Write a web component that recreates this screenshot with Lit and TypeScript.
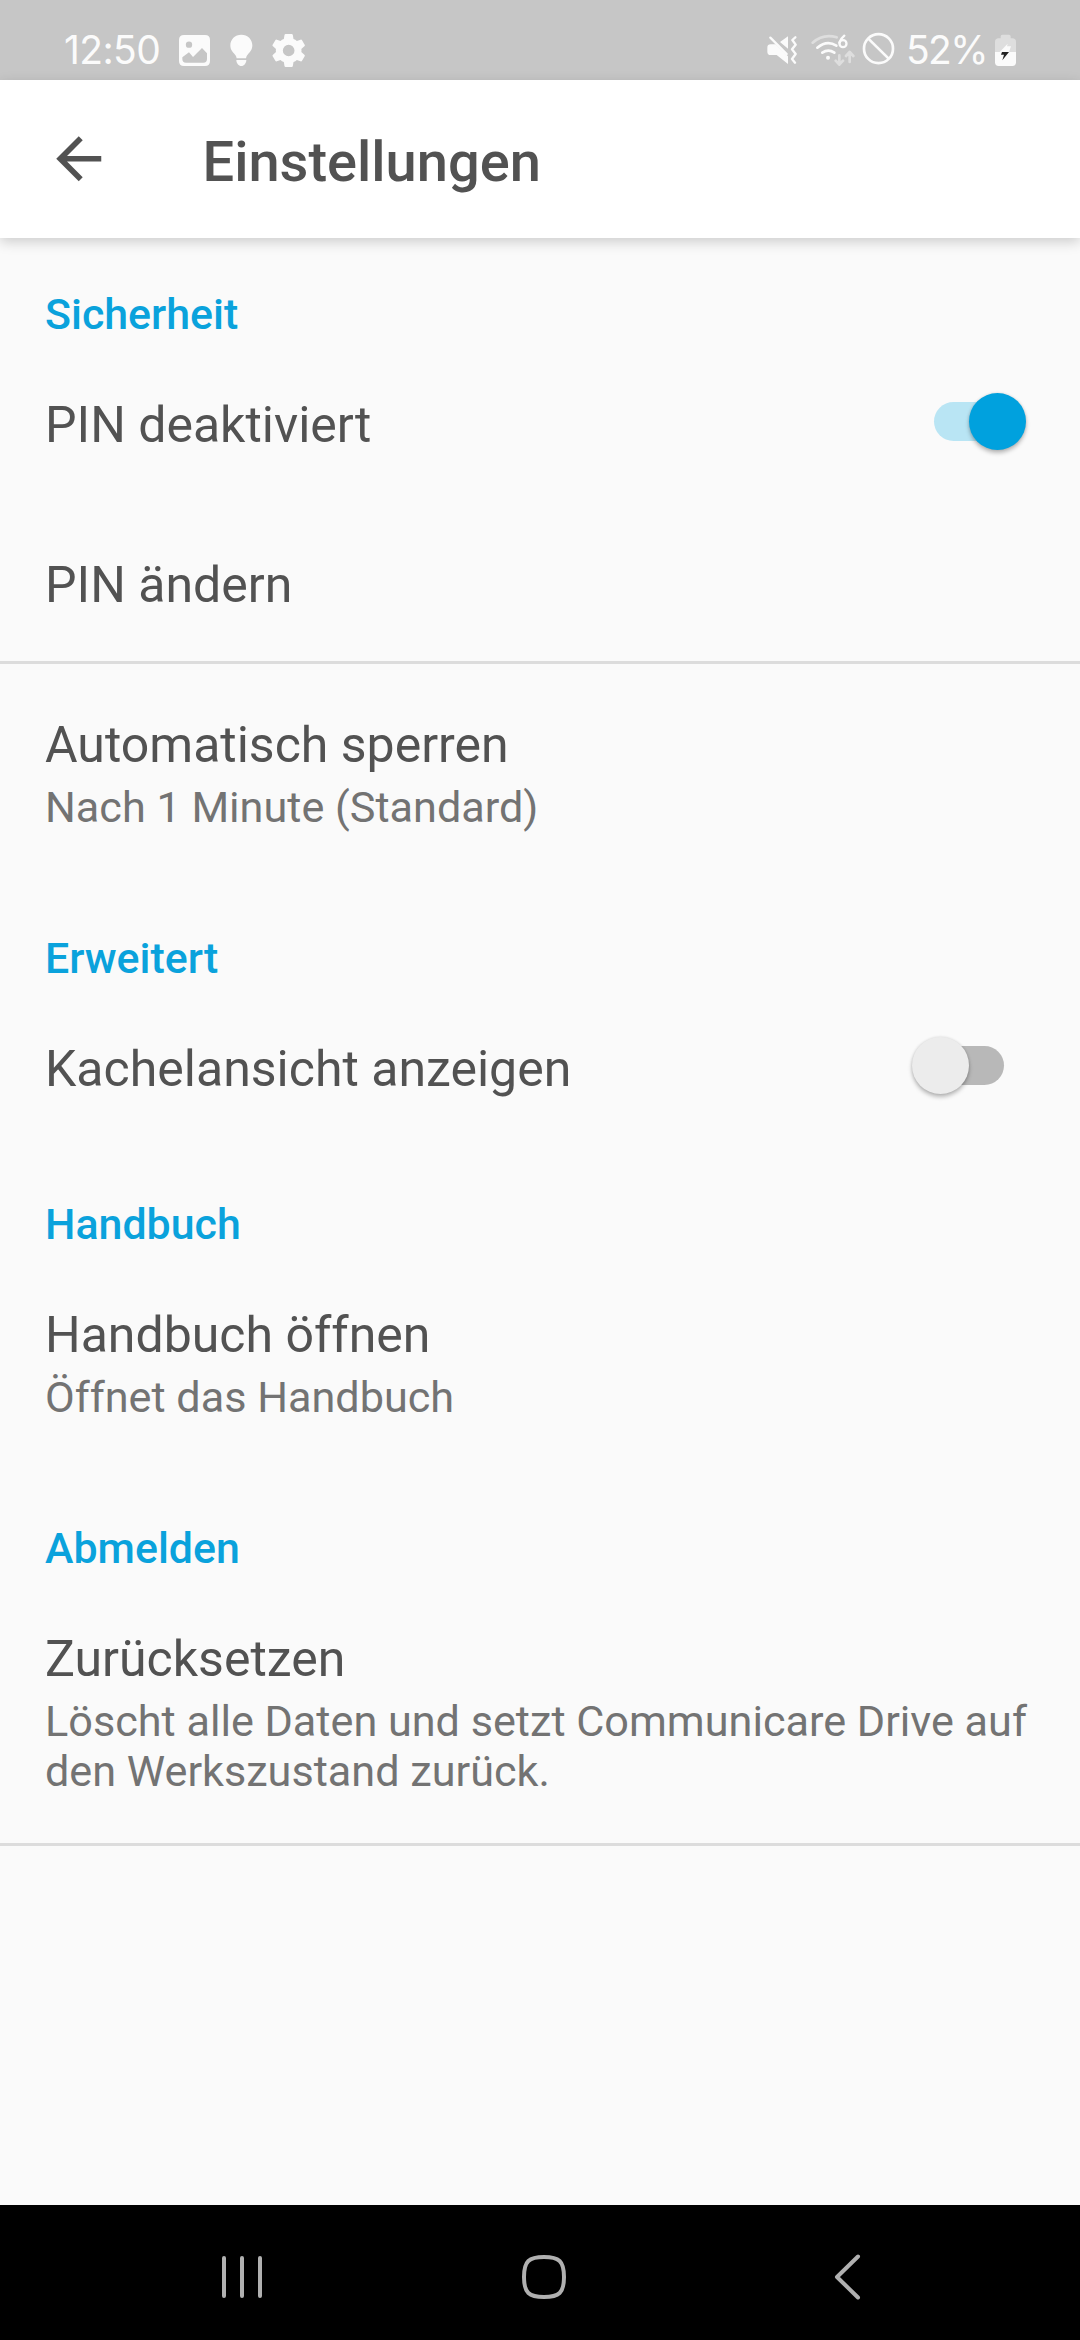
import { LitElement, html, css, nothing } from "lit";
import { customElement, property } from "lit/decorators.js";
import { classMap } from "lit/directives/class-map.js";

@customElement("status-bar")
class StatusBar extends LitElement {
  static styles = css`
    :host {
      display: flex;
      justify-content: space-between;
      box-sizing: border-box;
      height: 80px;
      padding: 30px 64px 0 64px;
      background: #c6c6c6;
      color: #fbfbfb;
      font-family: Inter, Roboto, sans-serif;
      font-weight: 400;
      font-size: 39px;
      line-height: 40px;
    }
    .side {
      display: flex;
      align-items: flex-start;
      height: 40px;
    }
    .time {
      width: 115px;
      letter-spacing: -0.6px;
      white-space: nowrap;
    }
    .percent {
      width: 89px;
      letter-spacing: -1.6px;
      white-space: nowrap;
    }
    svg {
      display: block;
      flex: none;
      height: 40px;
      fill: #fbfbfb;
    }
    .picture { width: 31px; margin-right: 20px; }
    .bulb { width: 23px; margin-right: 19px; }
    .gear { width: 33px; }
    .mute { width: 30px; margin-right: 14px; }
    .wifi { width: 44px; margin-right: 7px; }
    .block { width: 33px; margin-right: 11px; }
    .battery { width: 21px; }
    .line { fill: none; stroke: #fbfbfb; }
    .faint { fill: #dedede; }
    .faint-line { fill: none; stroke: #dedede; }
    .cut { fill: #c6c6c6; }
    .bolt { fill: #222; }
  `;
  render() {
    return html`
      <div class="side">
        <span class="time">12:50</span>
        <svg class="picture" viewBox="417 60 93 120">
          <path fill-rule="evenodd" d="M432 75h63q15 0 15 15v63q0 15-15 15h-63q-15 0-15-15V90q0-15 15-15ZM427 142v5q0 11 11 11h52q11 0 11-11v-17l-15-16-27 27-12-14Z"/>
          <circle class="cut" cx="447" cy="104" r="9.5"/>
        </svg>
        <svg class="bulb" viewBox="570 60 69 120">
          <path d="M604 74c-19 0-33 14-33 32 0 13 7 20 13 27 4 5 5 7 6 12h28c1-5 2-7 6-12 6-7 13-14 13-27 0-18-14-32-33-32ZM589 150h30c0 10-7 18-15 18s-15-8-15-18Z"/>
        </svg>
        <svg class="gear" viewBox="696 60 99 120">
          <path fill-rule="evenodd" d="M737 72h18q3 0 3.500 3l2 12q6 2 10 6l11-4q3-1 4.500 1.500l8 14q1.500 2.500-1 4.500l-9 8q1 4 0 9l9 8q2.500 2 1 4.500l-8 14q-1.500 2.500-4.500 1.500l-11-4q-4 4-10 6l-2 12q-.5 3-3.500 3h-18q-3 0-3.500-3l-2-12q-6-2-10-6l-11 4q-3 1-4.500-1.500l-8-14q-1.500-2.500 1-4.500l9-8q-1-5 0-9l-9-8q-2.500-2-1-4.500l8-14q1.500-2.500 4.500-1.500l11 4q4-4 10-6l2-12q.5-3 3.500-3ZM746 104a17.500 17.500 0 1 0 0 35 17.500 17.500 0 0 0 0-35Z"/>
        </svg>
      </div>
      <div class="side">
        <svg class="mute" viewBox="80 60 90 120">
          <path d="M143 79v37l-24-20ZM91 103h15l37 36v23l-34-27H91q-10 0-10-10v-12q0-10 10-10Z"/>
          <path class="line" stroke-width="7" stroke-linecap="round" d="M90 83l49 49"/>
          <path class="line" stroke-width="7" stroke-linecap="round" stroke-linejoin="round" d="M165 82l-9 8 10 14-11 14 11 14-11 15 9 11"/>
        </svg>
        <svg class="wifi" viewBox="214 60 132 120">
          <path class="faint-line" stroke-width="8" stroke-linecap="round" d="M219 98q32-28 72-16"/>
          <path class="line" stroke-width="8" stroke-linecap="round" d="M233 113q29-24 57-6M248 128q18-12 36 0"/>
          <circle cx="265" cy="143" r="6"/>
          <path class="line" stroke-width="7" stroke-linecap="round" d="M314 77q-12 10-15 21"/>
          <circle class="line" stroke-width="7" cx="310" cy="101" r="10.500"/>
          <path class="faint-line" stroke-width="8" stroke-linecap="round" stroke-linejoin="round" d="M299 136v27M288 152l11 12 11-12M330 156v-29M319 138l11-12 11 12"/>
        </svg>
        <svg class="block" viewBox="366 60 99 120">
          <circle class="line" stroke-width="8" cx="415.500" cy="116" r="43.500"/>
          <path class="line" stroke-width="8" d="M385 86l61 60"/>
        </svg>
        <span class="percent">52%</span>
        <svg class="battery" viewBox="765 60 63 120">
          <path class="faint" d="M787 74h20q5 0 5 5v6h5q11 0 11 11v30h-63V96q0-11 11-11h6v-6q0-5 5-5Z"/>
          <path d="M765 126h63v31q0 11-11 11h-41q-11 0-11-11Z"/>
          <path d="M803 101l-24 25h28l6-17h-12Z"/>
          <path class="bolt" d="M786 126h21l-20 25 5-17h-9Z"/>
        </svg>
      </div>
    `;
  }
}

@customElement("app-header")
class AppHeader extends LitElement {
  static styles = css`
    :host {
      display: flex;
      align-items: center;
      box-sizing: border-box;
      height: 158px;
      padding-left: 45px;
      background: #fff;
      color: #525252;
      box-shadow: 0 4px 12px rgba(0, 0, 0, 0.18);
      z-index: 1;
    }
    svg {
      width: 67.5px;
      height: 67.5px;
      fill: #525252;
    }
    h1 {
      margin: 6px 0 0 90px;
      font-size: 56px;
      font-weight: 500;
      line-height: 66px;
    }
  `;
  render() {
    return html`
      <svg viewBox="0 0 24 24"><path d="M20 11H7.830l5.590-5.590L12 4l-8 8 8 8 1.410-1.410L7.830 13H20v-2z"/></svg>
      <h1>Einstellungen</h1>
    `;
  }
}

@customElement("toggle-switch")
class ToggleSwitch extends LitElement {
  static styles = css`
    :host {
      display: block;
    }
    .track {
      display: flex;
      align-items: center;
      width: 70px;
      height: 39px;
      margin: 9px 0;
      border-radius: 20px;
      background: #b8b8b8;
    }
    .thumb {
      flex: none;
      width: 57px;
      height: 57px;
      margin-left: -22px;
      border-radius: 50%;
      background: #ececec;
      box-shadow: 0 3px 4px rgba(0, 0, 0, 0.26), 0 0 3px rgba(0, 0, 0, 0.12);
    }
    .on {
      background: #b9e5f4;
    }
    .on .thumb {
      margin-left: 35px;
      background: #00a1de;
    }
  `;
  @property({ type: Boolean }) on = false;
  render() {
    return html`<div class=${classMap({ track: true, on: this.on })}><div class="thumb"></div></div>`;
  }
}

@customElement("nav-bar")
class NavBar extends LitElement {
  static styles = css`
    :host {
      display: flex;
      justify-content: space-between;
      box-sizing: border-box;
      height: 135px;
      padding: 47px 216px 0 218px;
      background: #000;
    }
    svg {
      width: 48px;
      height: 50px;
      fill: none;
      stroke: #b0b0b0;
      stroke-width: 4;
      stroke-linecap: round;
      stroke-linejoin: round;
    }
    .home {
      margin-left: 4px;
    }
  `;
  render() {
    return html`
      <svg viewBox="0 0 48 50"><path d="M6 6v38M24 6v38M42 6v38"/></svg>
      <svg class="home" viewBox="0 0 48 50"><path d="M25 5c15 0 20 4 20 20s-5 20-20 20S5 41 5 25 10 5 25 5Z"/></svg>
      <svg viewBox="0 0 48 50"><path d="M42 4.500L21 25l21 20.500"/></svg>
    `;
  }
}

interface Item {
  title: string;
  summary?: string;
  on?: boolean;
  divider?: boolean;
}

const SECTIONS: { name: string; items: Item[] }[] = [
  {
    name: "Sicherheit",
    items: [
      { title: "PIN deaktiviert", on: true },
      { title: "PIN ändern", divider: true },
      { title: "Automatisch sperren", summary: "Nach 1 Minute (Standard)" },
    ],
  },
  { name: "Erweitert", items: [{ title: "Kachelansicht anzeigen", on: false }] },
  { name: "Handbuch", items: [{ title: "Handbuch öffnen", summary: "Öffnet das Handbuch" }] },
  {
    name: "Abmelden",
    items: [
      {
        title: "Zurücksetzen",
        summary: "Löscht alle Daten und setzt Communicare Drive auf den Werkszustand zurück.",
        divider: true,
      },
    ],
  },
];

@customElement("app-root")
class AppRoot extends LitElement {
  static styles = css`
    :host {
      display: flex;
      flex-direction: column;
      width: 1080px;
      height: 2340px;
      overflow: hidden;
      background: #fafafa;
      color: #525252;
      font-family: Roboto, sans-serif;
    }
    main {
      flex: 1;
    }
    h2 {
      box-sizing: border-box;
      height: 106px;
      margin: 0;
      padding: 51px 45px 0;
      color: #0aa2dc;
      font-size: 42.9px;
      font-weight: 500;
      line-height: 50px;
    }
    .row {
      display: flex;
      justify-content: space-between;
      box-sizing: border-box;
      min-height: 160px;
      padding: 51px 45px 49px;
    }
    .divided {
      border-bottom: 3px solid #dcdcdc;
      padding-bottom: 46px;
    }
    .title {
      font-size: 50px;
      line-height: 60px;
    }
    .summary {
      margin-top: 8px;
      color: #737373;
      font-size: 43.2px;
      line-height: 50px;
    }
    toggle-switch {
      height: 57px;
      margin: -2px 31px 0 0;
    }
  `;

  renderItem(item: Item) {
    return html`
      <div class=${classMap({ row: true, divided: !!item.divider })}>
        <div>
          <div class="title">${item.title}</div>
          ${item.summary ? html`<div class="summary">${item.summary}</div>` : nothing}
        </div>
        ${item.on === undefined ? nothing : html`<toggle-switch ?on=${item.on}></toggle-switch>`}
      </div>
    `;
  }

  render() {
    return html`
      <status-bar></status-bar>
      <app-header></app-header>
      <main>
        ${SECTIONS.map((s) => html`<section><h2>${s.name}</h2>${s.items.map((i) => this.renderItem(i))}</section>`)}
      </main>
      <nav-bar></nav-bar>
    `;
  }
}
